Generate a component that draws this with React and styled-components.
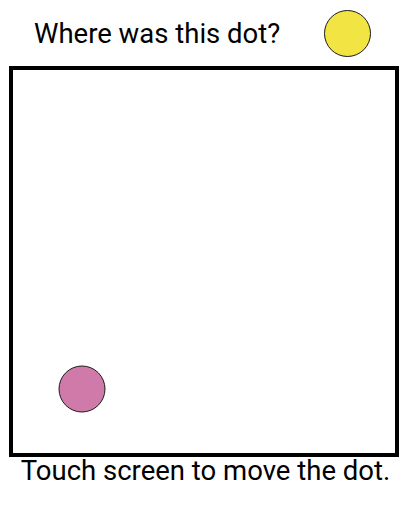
import React from "react";
import styled, { createGlobalStyle } from "styled-components";

const GlobalStyle = createGlobalStyle`
  html, body {
    margin: 0;
    padding: 0;
    background: #fff;
  }
  body {
    font-family: Roboto, "Liberation Sans", sans-serif;
    color: #000;
  }
`

const Page = styled.div`
  width: 411px;
  height: 519px;
  display: flex;
  flex-direction: column;
`

const Header = styled.div`
  height: 66px;
  display: flex;
  align-items: center;
  justify-content: space-between;
  padding: 0 40px 0 34px;
  box-sizing: border-box;
`

const Question = styled.div`
  font-size: 27.5px;
  line-height: 1;
  margin-top: 2px;
`

const Dot = styled.div`
  width: ${p => p.size}px;
  height: ${p => p.size}px;
  border-radius: 50%;
  border: 1.5px solid #1a1a1a;
  box-sizing: border-box;
  background: ${p => p.color};
`

const Board = styled.div`
  position: relative;
  width: 390px;
  height: 391px;
  margin-left: 9px;
  border: 4px solid #000;
  box-sizing: border-box;
`

const Marker = styled(Dot)`
  position: absolute;
  transform: translate(-50%, -50%);
`

const Caption = styled.div`
  font-size: 27.5px;
  line-height: 1;
  text-align: center;
`

export default function App() {
    const marker = { x: 82 - 13, y: 389 - 70 };
    return (
        <Page>
            <GlobalStyle />
            <Header>
                <Question>Where was this dot?</Question>
                <Dot size={47} color="#f1e443" />
            </Header>
            <Board>
                <Marker size={47} color="#cf7aa9" style={{ left: marker.x, top: marker.y }} />
            </Board>
            <Caption>Touch screen to move the dot.</Caption>
        </Page>
    )
}
